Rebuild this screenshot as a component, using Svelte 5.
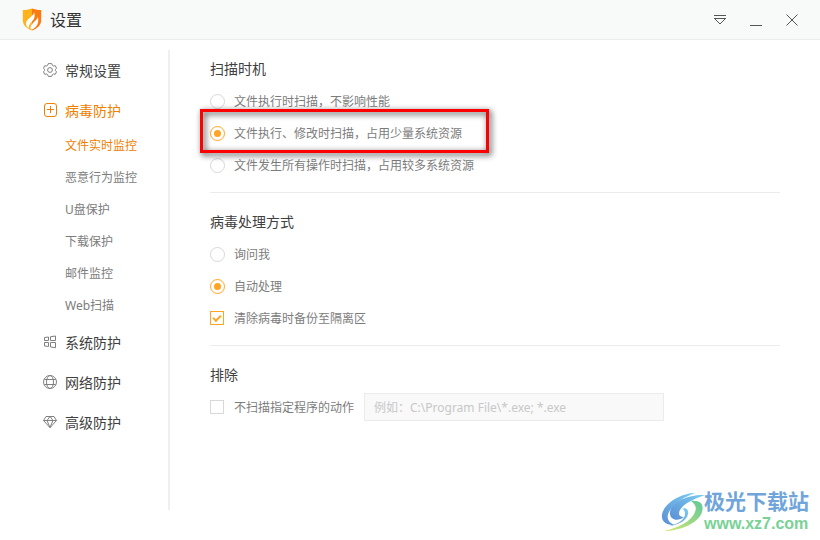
<script>

    // sidebar entries, 'children' is shown below its parent
    const menu = [
        { id: 'general', label: '常规设置', icon: 'gear' },
        {
            id: 'virus', label: '病毒防护', icon: 'plus',
            children: [
                { id: 'file', label: '文件实时监控' },
                { id: 'behavior', label: '恶意行为监控' },
                { id: 'usb', label: 'U盘保护' },
                { id: 'download', label: '下载保护' },
                { id: 'mail', label: '邮件监控' },
                { id: 'web', label: 'Web扫描' }
            ]
        },
        { id: 'system', label: '系统防护', icon: 'windows' },
        { id: 'network', label: '网络防护', icon: 'globe' },
        { id: 'advanced', label: '高级防护', icon: 'diamond' }
    ];

    const scan_options = [
        { value: 'execute', label: '文件执行时扫描，不影响性能' },
        { value: 'modify', label: '文件执行、修改时扫描，占用少量系统资源', marked: true },
        { value: 'all', label: '文件发生所有操作时扫描，占用较多系统资源' }
    ];

    const handle_options = [
        { value: 'ask', label: '询问我' },
        { value: 'auto', label: '自动处理' }
    ];

    // state
    let active_group = 'virus';
    let active_page = 'file';
    let scan_mode = 'modify';
    let handle_mode = 'auto';
    let backup = true;
    let exclude = false;
    let exclude_paths = '';

</script>


<div class="window">

    <header class="titlebar">
        <svg class="logo" viewBox="0 0 20 23" aria-hidden="true">
            <path d="M10 0.500C7 1.500 4 2.200 0.800 2V12C0.800 17 4.500 20.500 10 22.500Z" fill="#ffb21a" />
            <path d="M10 0.500C13 1.500 16 2.200 19.200 2V12C19.200 17 15.500 20.500 10 22.500Z" fill="#fb7b10" />
            <path d="M12 4C12.500 8 4 10.500 4 15.500C4 17.500 5 19 7 20.200C6.500 17 8 15.500 10 13.500C12.500 11 13.500 7.500 12 4Z" fill="#fff" />
            <path d="M15.800 8.500C16 12.500 8.500 14.500 8.500 20.800L10 21.600C14.500 19.500 17.500 15 15.800 8.500Z" fill="#fff" />
        </svg>
        <h1>设置</h1>
        <div class="controls">
            <button type="button" aria-label="菜单">
                <svg viewBox="0 0 14 14"><path d="M1 2.500H13M1 5.500H13M2 6L7 11L12 6" /></svg>
            </button>
            <button type="button" aria-label="最小化">
                <svg viewBox="0 0 14 14"><path d="M1 12.500H13" /></svg>
            </button>
            <button type="button" aria-label="关闭">
                <svg viewBox="0 0 14 14"><path d="M1.500 1.500L12.500 12.500M12.500 1.500L1.500 12.500" /></svg>
            </button>
        </div>
    </header>

    <div class="body">
        <nav class="sidebar">
            {#each menu as item}
                <a class="item" class:active={item.id === active_group} href="#{item.id}" on:click={() => active_group = item.id}>
                    <svg viewBox="0 0 14 14" aria-hidden="true">
                        {#if item.icon === 'gear'}
                            <path d="M5.300 0.600H8.700L9.300 2.300L10.500 3L12.300 2.700L13.500 5.200L12.500 6.500V7.500L13.500 8.800L12.300 11.300L10.500 11L9.300 11.700L8.700 13.400H5.300L4.700 11.700L3.500 11L1.700 11.300L0.500 8.800L1.500 7.500V6.500L0.500 5.200L1.700 2.700L3.500 3L4.700 2.300Z" />
                            <circle cx="7" cy="7" r="2.400" />
                        {:else if item.icon === 'plus'}
                            <rect x="1.500" y="0.500" width="12" height="13" rx="2.500" />
                            <path d="M4 6.500H11M7.500 3V10" />
                        {:else if item.icon === 'windows'}
                            <path d="M1.500 2.500L5.500 2V5.500H1.500ZM7.500 1.700L12.500 1V5.500H7.500ZM1.500 7.500H5.500V11.500L1.500 11ZM7.500 7.500H12.500V12.700L7.500 12Z" />
                        {:else if item.icon === 'globe'}
                            <circle cx="7" cy="7" r="6.500" />
                            <ellipse cx="7" cy="7" rx="3.500" ry="6.500" />
                            <path d="M1.300 4.500H12.700M1.300 9.500H12.700" />
                        {:else}
                            <path d="M3 1.500H11L13.500 5.500L7 12.700L0.500 5.500ZM0.500 5.500H13.500M4 5.500L7 12.500L10 5.500M4 5.500L7 1.500L10 5.500" />
                        {/if}
                    </svg>
                    {item.label}
                </a>
                {#if item.children}
                    {#each item.children as child}
                        <a class="subitem" class:active={child.id === active_page} href="#{child.id}" on:click={() => active_page = child.id}>{child.label}</a>
                    {/each}
                {/if}
            {/each}
        </nav>

        <main class="content">

            <!-- Scan timing -->
            <section>
                <h2>扫描时机</h2>
                {#each scan_options as option}
                    <label class="option" class:marked={option.marked}>
                        <input type="radio" name="scan" value={option.value} bind:group={scan_mode} />
                        <span>{option.label}</span>
                    </label>
                {/each}
            </section>

            <!-- Virus handling -->
            <section>
                <h2>病毒处理方式</h2>
                {#each handle_options as option}
                    <label class="option">
                        <input type="radio" name="handle" value={option.value} bind:group={handle_mode} />
                        <span>{option.label}</span>
                    </label>
                {/each}
                <label class="option">
                    <input type="checkbox" bind:checked={backup} />
                    <span>清除病毒时备份至隔离区</span>
                </label>
            </section>

            <!-- Exclusions -->
            <section>
                <h2>排除</h2>
                <div class="exclude">
                    <label class="option">
                        <input type="checkbox" bind:checked={exclude} />
                        <span>不扫描指定程序的动作</span>
                    </label>
                    <input class="paths" type="text" aria-label="不扫描的程序" placeholder="例如：C:\Program File\*.exe; *.exe" disabled={!exclude} bind:value={exclude_paths} />
                </div>
            </section>
        </main>
    </div>

    <!-- Site mark -->
    <div class="sitemark">
        <svg viewBox="0 0 46 42" aria-hidden="true">
            <defs>
                <linearGradient id="mark-blue" x1="0" y1="1" x2="1" y2="0">
                    <stop offset="0" stop-color="#5c8fd6" />
                    <stop offset="1" stop-color="#78cdf0" />
                </linearGradient>
                <linearGradient id="mark-green" x1="0" y1="1" x2="1" y2="0">
                    <stop offset="0" stop-color="#d6e76e" />
                    <stop offset="1" stop-color="#5fc99a" />
                </linearGradient>
            </defs>
            <path d="M35 2C21 2 3 13 2 24C1 31 7 34 14 34C8 31 6 27 9 21C13 13 24 6 35 2Z" fill="url(#mark-blue)" />
            <path d="M45 4C29 3 11 11 10 21C9 29 18 31 24 26C19 26 18 23 20 19C24 12 34 8 45 4Z" fill="url(#mark-blue)" />
            <path d="M31 10C41 9 44 14 42 21C39 32 20 40 4 40C18 37 32 30 35 21C37 16 35 13 31 10Z" fill="url(#mark-green)" />
            <path d="M22 18C26 16 29 19 28 23C27 29 19 34 9 35C19 33 25 28 25 23C25 20 24 18 22 18Z" fill="url(#mark-blue)" />
        </svg>
        <div class="sitename">
            <strong>极光下载站</strong>
            <span>www.xz7.com</span>
        </div>
    </div>
</div>


<style>

    :global(body) {
        margin: 0;
        background: #fff;
    }

    .window {
        position: relative;
        display: flex;
        flex-direction: column;
        min-height: 100vh;
        font-family: "Noto Sans", "Noto Sans CJK SC", sans-serif;
        font-size: 12px;
        color: #7c7c7c;
    }

    .titlebar {
        display: flex;
        align-items: center;
        height: 39px;
        padding: 0 10px 0 22px;
        background: #f8f9f9;
        border-bottom: 1px solid #ececec;
    }

    .logo {
        width: 20px;
        height: 23px;
        margin-right: 8px;
    }

    h1 {
        margin: 0;
        font-size: 16px;
        font-weight: 400;
        line-height: 24px;
        color: #333;
    }

    .controls {
        display: flex;
        margin-left: auto;
    }

    .controls button {
        display: flex;
        align-items: center;
        justify-content: center;
        width: 36px;
        height: 38px;
        padding: 0;
        border: none;
        background: none;
    }

    .controls svg {
        width: 14px;
        height: 14px;
        fill: none;
        stroke: #555;
    }

    .body {
        display: flex;
        flex: 1;
    }

    /* sidebar */
    .sidebar {
        box-sizing: border-box;
        width: 170px;
        margin: 10px 0 30px;
        padding-left: 43px;
        border-right: 2px solid #efefef;
    }

    .item {
        display: flex;
        align-items: center;
        gap: 8px;
        height: 40px;
        font-size: 14px;
        color: #404040;
        text-decoration: none;
    }

    .item svg {
        width: 14px;
        height: 14px;
        fill: none;
        stroke: #808080;
    }

    .subitem {
        display: block;
        padding-left: 22px;
        line-height: 32px;
        color: #7c7c7c;
        text-decoration: none;
    }

    .item.active,
    .subitem.active {
        color: #f08000;
    }

    .item.active svg {
        stroke: #f08000;
    }

    /* settings */
    .content {
        flex: 1;
        padding: 0 40px;
    }

    section {
        padding: 19px 0 11px;
        border-bottom: 1px solid #ececec;
    }

    section:last-child {
        border-bottom: none;
    }

    h2 {
        margin: 0 0 6px;
        font-size: 14px;
        font-weight: 400;
        line-height: 20px;
        color: #404040;
    }

    .option {
        position: relative;
        display: grid;
        grid-template-columns: 24px auto;
        align-items: center;
        width: fit-content;
        height: 32px;
    }

    .option input {
        appearance: none;
        display: grid;
        place-content: center;
        box-sizing: border-box;
        width: 15px;
        height: 15px;
        margin: 0;
        border: 1px solid #d8d8d8;
        background: #fff;
    }

    .option input[type="radio"] {
        border-radius: 50%;
    }

    .option input[type="checkbox"] {
        width: 14px;
        height: 14px;
    }

    .option input:checked {
        border-color: #ffa522;
    }

    .option input[type="radio"]:checked::before {
        content: "";
        width: 7px;
        height: 7px;
        border-radius: 50%;
        background: #ffa522;
    }

    .option input[type="checkbox"]:checked::before {
        content: "";
        width: 6px;
        height: 3px;
        border-left: 2px solid #ffa522;
        border-bottom: 2px solid #ffa522;
        transform: translateY(-1px) rotate(-45deg);
    }

    /* red frame round the recommended option */
    .marked::after {
        content: "";
        position: absolute;
        z-index: 1;
        top: -8px;
        right: -27px;
        bottom: -4px;
        left: -10px;
        border: 3px solid #f00;
        filter: drop-shadow(2px 2px 3px rgba(0, 0, 0, 0.8));
        pointer-events: none;
    }

    .exclude {
        display: flex;
        align-items: center;
        gap: 10px;
    }

    .paths {
        box-sizing: border-box;
        width: 300px;
        height: 28px;
        padding: 0 9px;
        border: 1px solid #ebebeb;
        background: #f9f9f9;
        font: inherit;
        color: #777;
    }

    .paths::placeholder {
        color: #c8c8c8;
    }

    /* site mark */
    .sitemark {
        position: absolute;
        right: 11px;
        bottom: 6px;
        display: flex;
        align-items: center;
    }

    .sitemark svg {
        width: 46px;
        height: 42px;
        margin-right: -2px;
    }

    .sitename {
        display: grid;
        font-family: "Liberation Sans", "Noto Sans CJK SC", sans-serif;
    }

    .sitename strong {
        font-size: 21px;
        line-height: 24px;
        color: #6fa5da;
    }

    .sitename span {
        font-size: 16px;
        font-weight: 700;
        line-height: 20px;
        color: #78d296;
    }

</style>
